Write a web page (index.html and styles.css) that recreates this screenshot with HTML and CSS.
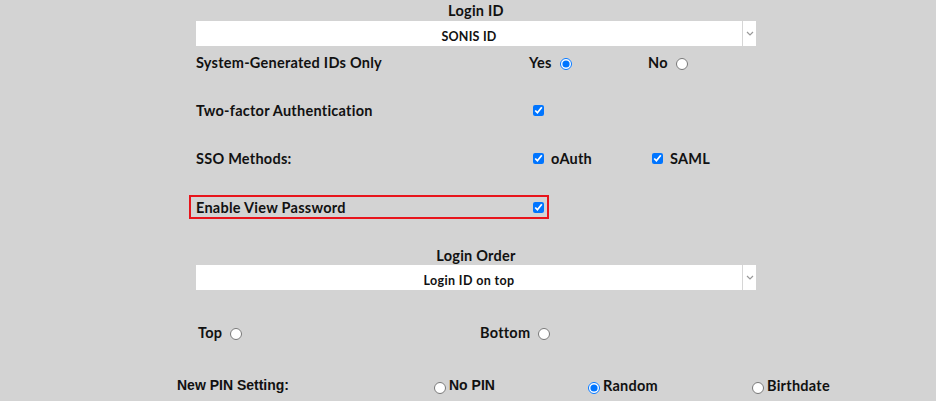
FILE: index.html
```html
<!DOCTYPE html>
<html>
<head>
<meta charset="utf-8">
<link rel="stylesheet" href="styles.css">
</head>
<body>
<div class="page">
  <div class="title">Login ID</div>
  <div class="select"><span class="select-value">SONIS ID</span><span class="select-arrow"><svg width="8" height="5" viewBox="0 0 8 5"><path d="M1 1l3 3 3-3" fill="none" stroke="#999" stroke-width="1.2"/></svg></span></div>

  <div class="row first">
    <div class="label">System-Generated IDs Only</div>
    <div class="col2"><span>Yes</span><input class="after" type="radio" name="sys" checked></div>
    <div class="col3"><span>No</span><input class="after" type="radio" name="sys"></div>
  </div>

  <div class="row">
    <div class="label">Two-factor Authentication</div>
    <div class="col2"><input type="checkbox" checked></div>
  </div>

  <div class="row">
    <div class="label">SSO Methods:</div>
    <div class="col2"><input type="checkbox" checked><span class="cb-text">oAuth</span></div>
    <div class="col3"><input type="checkbox" checked><span class="cb-text">SAML</span></div>
  </div>

  <div class="row boxed">
    <div class="highlight">
      <div class="label hl-label">Enable View Password</div>
      <div class="col2"><input type="checkbox" checked></div>
    </div>
  </div>

  <div class="title order">Login Order</div>
  <div class="select"><span class="select-value small">Login ID on top</span><span class="select-arrow"><svg width="8" height="5" viewBox="0 0 8 5"><path d="M1 1l3 3 3-3" fill="none" stroke="#999" stroke-width="1.2"/></svg></span></div>

  <div class="row pos">
    <div class="pos-top"><span>Top</span><input class="after" type="radio" name="pos"></div>
    <div class="pos-bottom"><span>Bottom</span><input class="after" type="radio" name="pos"></div>
  </div>

  <div class="row pin">
    <div class="pin-label">New PIN Setting:</div>
    <div class="pin-opt pin-none"><input type="radio" name="pin"><span class="arial">No PIN</span></div>
    <div class="pin-opt pin-random"><input type="radio" name="pin" checked><span>Random</span></div>
    <div class="pin-opt pin-birth"><input type="radio" name="pin"><span>Birthdate</span></div>
  </div>
</div>
</body>
</html>
```

FILE: styles.css
```css
html, body {
  margin: 0;
  padding: 0;
  background: #d3d3d3;
}
body {
  font-family: "Lato", "Open Sans", sans-serif;
  font-weight: 700;
  font-size: 14.5px;
  letter-spacing: 0.25px;
  color: #111;
  width: 936px;
  height: 401px;
  overflow: hidden;
}
.page {
  margin-left: 196px;
  width: 560px;
  display: flex;
  flex-direction: column;
}
.title {
  height: 21px;
  line-height: 22px;
  text-align: center;
}
.title.order {
  margin-top: 27px;
  height: 19px;
  line-height: 20px;
}
.select {
  height: 25px;
  background: #fff;
  display: flex;
  align-items: stretch;
  box-sizing: border-box;
}
.select-value {
  flex: 1;
  text-align: center;
  font-size: 12.5px;
  letter-spacing: 0.2px;
  line-height: 25px;
  padding-top: 3px;
  box-sizing: border-box;
}
.select-value.small {
  letter-spacing: 0.35px;
}
.select-arrow {
  width: 13px;
  border-left: 1px solid #d6d6d6;
  display: flex;
  align-items: center;
  justify-content: center;
}
.row {
  display: flex;
  align-items: center;
  height: 24px;
  margin-top: 24px;
}
.row.first {
  margin-top: 4px;
}
.row.boxed {
  margin-top: 25px;
}
.label {
  width: 333px;
  flex: none;
}
.col2 {
  width: 119px;
  flex: none;
  display: flex;
  align-items: center;
}
.col3 {
  display: flex;
  align-items: center;
}
input[type="checkbox"] {
  width: 11px;
  height: 11px;
  margin: 0 3px 0 4px;
}
.cb-text {
  margin-left: 4px;
}
input[type="radio"] {
  width: 12px;
  height: 12px;
  margin: 3px 0 0 5px;
}
input[type="radio"].after {
  margin-left: 8px;
}
.highlight {
  display: flex;
  align-items: center;
  width: 360px;
  height: 24px;
  box-sizing: border-box;
  margin-left: -7px;
  padding-left: 5px;
  border: 2px solid #e8141b;
}
.hl-label {
  width: 333px;
}
.row.pos {
  margin-top: 30px;
}
.pos-top {
  margin-left: 2px;
  width: 282px;
  display: flex;
  align-items: center;
}
.pos-bottom {
  display: flex;
  align-items: center;
}
.row.pin {
  margin-top: 29px;
  margin-left: -19px;
}
.pin-label {
  font-family: "Liberation Sans", Arial, sans-serif;
  letter-spacing: 0;
  font-size: 14px;
  width: 257px;
  flex: none;
}
.pin-opt {
  display: flex;
  align-items: center;
  flex: none;
}
.pin-opt input[type="radio"] {
  margin: 5px 3px 0 0;
}
.pin-none { width: 154px; }
.pin-random { width: 164px; }
.arial {
  font-family: "Liberation Sans", Arial, sans-serif;
  letter-spacing: 0;
  font-size: 14px;
}
```
